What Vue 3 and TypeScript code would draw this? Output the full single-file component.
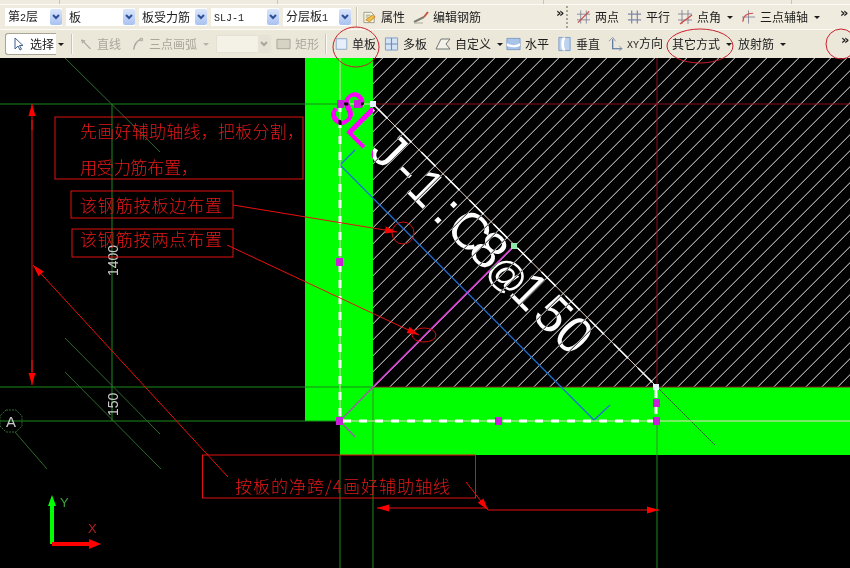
<script setup lang="ts">
type Point = { x: number; y: number }
type Stroke = { d: string; stroke?: string; fill?: string; width?: number }
type Tool = { label?: string; icon?: string; caret?: boolean; off?: boolean; width: number; iconWidth?: number }

const icons: Record<string, Stroke[]> = {
  attr: [
    { d: 'M2 3h8l3 3v8H2z', stroke: '#9a9a8a', fill: '#f8f6ea' },
    { d: 'M4 11l7-5 3 2-6 5z', stroke: '#c98a1e', fill: '#f2c04a' },
    { d: 'M4 6h5M4 8h3', stroke: '#8fa36e' },
  ],
  edit: [
    { d: 'M1 13l10-5', stroke: '#7d7d70', width: 2 },
    { d: 'M11 8l4-5', stroke: '#c0563c', width: 2 },
    { d: 'M1 14h9', stroke: '#a8a898' },
  ],
  two: [
    { d: 'M5 1v14M11 1v14M1 5h14M1 11h14', stroke: '#8a8a9c' },
    { d: 'M2 14L14 2', stroke: '#c64a4a', width: 1.4 },
  ],
  para: [{ d: 'M5 1v14M11 1v14M1 5h14M1 11h14', stroke: '#7f86a8', width: 1.3 }],
  angle: [
    { d: 'M5 1v14M11 1v14M1 5h14M1 11h14', stroke: '#8a8a9c' },
    { d: 'M3 15L15 6', stroke: '#d04a4a', width: 1.4 },
  ],
  three: [
    { d: 'M8 1v14M1 8h14', stroke: '#8a8a9c' },
    { d: 'M2 13c0-6 4-9 11-9', stroke: '#d04a4a', fill: 'none', width: 1.3 },
  ],
  pick: [{ d: 'M5 2v11l3-3 2 4 1.5-.8-2-3.7H13z', stroke: '#3f5f8f', fill: '#fff' }],
  line: [
    { d: 'M2 3l11 11', stroke: '#a7a599', width: 1.5 },
    { d: 'M2 3l4 1-3 3z', stroke: '#a7a599', fill: '#c4c2b6' },
  ],
  arc: [
    { d: 'M2 15C3 8 6 4 11 2', stroke: '#a7a599', fill: 'none', width: 1.5 },
    { d: 'M10 1h3v3h-3z', stroke: '#a7a599', fill: '#d4d2c6' },
  ],
  rect: [{ d: 'M1 3h14v10H1z', stroke: '#a7a599', fill: '#d6d3c5' }],
  single: [{ d: 'M1.5 1.5h13v13h-13z', stroke: '#7f9cc4', fill: '#e6eefa' }],
  multi: [
    { d: 'M1.5 1.5h13v13h-13z', stroke: '#7f9cc4', fill: '#d5e3f6' },
    { d: 'M8 1.5v13M1.5 8h13', stroke: '#6f8cb4', width: 1.2 },
  ],
  custom: [{ d: 'M1 13L6 3h9l-4 5 4 5z', stroke: '#6f7478', fill: '#f4f2e6' }],
  level: [
    { d: 'M1 2h14v12H1z', stroke: '#7f9cc4', fill: '#a9c4e8' },
    { d: 'M1 7c4 3 10 3 14 0v3c-4 2-10 2-14 0z', fill: '#fff' },
  ],
  vert: [
    { d: 'M2 1h12v14H2z', stroke: '#7f9cc4', fill: '#bcd2ee' },
    { d: 'M6 1c-2 4-2 10 0 14h3c-2-4-2-10 0-14z', fill: '#fff' },
  ],
  xy: [
    { d: 'M5 3v10h10', stroke: '#4a6a9a', fill: 'none', width: 1.2 },
    { d: 'M1 5l4-4 3 4M12 10l3 3-3 2', stroke: '#8a94a8', fill: 'none' },
  ],
}

const combos = ['第2层', '板', '板受力筋', 'SLJ-1', '分层板1']

const firstTools: Tool[] = [
  { label: '属性', icon: 'attr', width: 51 },
  { label: '编辑钢筋', icon: 'edit', width: 143, iconWidth: 16 },
]

const axisTools: Tool[] = [
  { label: '两点', icon: 'two', width: 51 },
  { label: '平行', icon: 'para', width: 50 },
  { label: '点角', icon: 'angle', caret: true, width: 64, iconWidth: 16 },
  { label: '三点辅轴', icon: 'three', caret: true, width: 82 },
]

const drawTools: Tool[] = [
  { label: '直线', icon: 'line', off: true, width: 52, iconWidth: 13 },
  { label: '三点画弧', icon: 'arc', off: true, caret: true, width: 84, iconWidth: 13 },
]

const boardTools: Tool[] = [
  { label: '单板', icon: 'single', width: 49, iconWidth: 13 },
  { label: '多板', icon: 'multi', width: 51 },
  { label: '自定义', icon: 'custom', caret: true, width: 71, iconWidth: 16 },
  { label: '水平', icon: 'level', width: 51 },
  { label: '垂直', icon: 'vert', width: 51 },
  { label: 'XY方向', icon: 'xy', width: 64 },
  { label: '其它方式', caret: true, width: 66 },
  { label: '放射筋', caret: true, width: 50 },
]

function segments(label: string) {
  return label.match(/[A-Za-z0-9-]+|[^A-Za-z0-9-]+/g) ?? []
}

function isLatin(part: string) {
  return /^[A-Za-z0-9-]+$/.test(part)
}

// hatch over the slab, clipped to its rectangle
const hatch: Point[] = []
for (let c = 424.7; c < 1240; c += 16) {
  hatch.push({ x: c - 58, y: c - 387 })
}

const arrows: [Point, Point][] = [
  [{ x: 32, y: 130 }, { x: 32, y: 104 }],
  [{ x: 32, y: 360 }, { x: 32, y: 385 }],
  [{ x: 233, y: 205 }, { x: 397, y: 232 }],
  [{ x: 227, y: 245 }, { x: 419, y: 335 }],
  [{ x: 228, y: 477 }, { x: 33, y: 265 }],
  [{ x: 466, y: 482 }, { x: 488, y: 510 }],
  [{ x: 488, y: 508 }, { x: 377, y: 508 }],
  [{ x: 488, y: 510 }, { x: 659, y: 510 }],
]

function arrowHead(from: Point, to: Point) {
  const length = Math.hypot(to.x - from.x, to.y - from.y) || 1
  const ux = (to.x - from.x) / length
  const uy = (to.y - from.y) / length
  const bx = to.x - ux * 12
  const by = to.y - uy * 12
  return `${to.x},${to.y} ${bx - uy * 3.5},${by + ux * 3.5} ${bx + uy * 3.5},${by - ux * 3.5}`
}

const handles: Point[] = [
  { x: 340, y: 104 },
  { x: 357, y: 104 },
  { x: 339, y: 262 },
  { x: 339, y: 421 },
  { x: 498, y: 421 },
  { x: 656, y: 403 },
  { x: 656, y: 421 },
]
</script>

<template>
  <div class="page">
    <header class="toolbar">
      <div class="strip">
        <span class="strip-cell strip-a"></span>
        <span class="strip-cell strip-b"></span>
        <span class="strip-cell strip-c"></span>
        <span class="strip-cell strip-d"></span>
      </div>

      <div class="row row-one">
        <div v-for="combo in combos" :key="combo" class="combo">
          <span class="combo-text">
            <span v-for="part in segments(combo)" :key="part" :class="{ latin: isLatin(part) }">{{ part }}</span>
          </span>
          <span class="combo-button">
            <svg width="8" height="6" viewBox="0 0 8 6"><path d="M1 1l3 3 3-3" fill="none" stroke="#2f4f96" stroke-width="2" /></svg>
          </span>
        </div>
        <span class="sep sep-one"></span>
        <div v-for="tool in firstTools" :key="tool.label" class="tool" :style="{ width: `${tool.width}px` }">
          <svg class="icon" :width="tool.iconWidth ?? 15" height="16" viewBox="0 0 16 16">
            <path v-for="(s, i) in icons[tool.icon!]" :key="i" :d="s.d" :stroke="s.stroke ?? 'none'" :fill="s.fill ?? 'none'" :stroke-width="s.width ?? 1" />
          </svg>
          <span>{{ tool.label }}</span>
        </div>
        <span class="more">»</span>
        <span class="grip"></span>
        <div v-for="tool in axisTools" :key="tool.label" class="tool" :style="{ width: `${tool.width}px` }">
          <svg class="icon" :width="tool.iconWidth ?? 15" height="16" viewBox="0 0 16 16">
            <path v-for="(s, i) in icons[tool.icon!]" :key="i" :d="s.d" :stroke="s.stroke ?? 'none'" :fill="s.fill ?? 'none'" :stroke-width="s.width ?? 1" />
          </svg>
          <span>{{ tool.label }}</span>
          <i v-if="tool.caret" class="caret"></i>
        </div>
        <span class="more more-end">»</span>
      </div>

      <div class="row row-two">
        <div class="pick-box">
          <svg class="icon" width="16" height="16" viewBox="0 0 16 16">
            <path v-for="(s, i) in icons.pick" :key="i" :d="s.d" :stroke="s.stroke ?? 'none'" :fill="s.fill ?? 'none'" />
          </svg>
          <span>选择</span>
        </div>
        <i class="caret caret-pick"></i>
        <span class="sep sep-two"></span>
        <div v-for="tool in drawTools" :key="tool.label" class="tool off" :style="{ width: `${tool.width}px` }">
          <svg class="icon" :width="tool.iconWidth ?? 15" height="16" viewBox="0 0 16 16">
            <path v-for="(s, i) in icons[tool.icon!]" :key="i" :d="s.d" :stroke="s.stroke ?? 'none'" :fill="s.fill ?? 'none'" :stroke-width="s.width ?? 1" />
          </svg>
          <span>{{ tool.label }}</span>
          <i v-if="tool.caret" class="caret"></i>
        </div>
        <div class="combo combo-off">
          <span class="combo-button">
            <svg width="8" height="6" viewBox="0 0 8 6"><path d="M1 1l3 3 3-3" fill="none" stroke="#a8a69c" stroke-width="2" /></svg>
          </span>
        </div>
        <div class="tool off rect-tool">
          <svg class="icon" width="15" height="16" viewBox="0 0 16 16">
            <path v-for="(s, i) in icons.rect" :key="i" :d="s.d" :stroke="s.stroke ?? 'none'" :fill="s.fill ?? 'none'" />
          </svg>
          <span>矩形</span>
        </div>
        <span class="sep sep-three"></span>
        <div v-for="tool in boardTools" :key="tool.label" class="tool" :style="{ width: `${tool.width}px` }">
          <svg v-if="tool.icon" class="icon" :width="tool.iconWidth ?? 15" height="16" viewBox="0 0 16 16">
            <path v-for="(s, i) in icons[tool.icon]" :key="i" :d="s.d" :stroke="s.stroke ?? 'none'" :fill="s.fill ?? 'none'" :stroke-width="s.width ?? 1" />
          </svg>
          <span>
            <span v-for="part in segments(tool.label!)" :key="part" :class="{ latin: isLatin(part) }">{{ part }}</span>
          </span>
          <i v-if="tool.caret" class="caret"></i>
        </div>
        <span class="more more-two">»</span>
      </div>
    </header>

    <svg class="canvas" width="850" height="510" viewBox="0 58 850 510">
      <defs>
        <clipPath id="slab-clip"><rect x="373" y="58" width="477" height="329" /></clipPath>
      </defs>

      <rect x="0" y="58" width="850" height="510" fill="#000" />

      <!-- slab beams -->
      <path d="M305 58H373V387H850V455H340V421H305Z" fill="#00ff00" />

      <g clip-path="url(#slab-clip)">
        <line v-for="(p, i) in hatch" :key="i" :x1="p.x" y1="58" :x2="p.y" y2="387" class="hatch" />
      </g>

      <!-- axis lines -->
      <path d="M0 104H340M0 387H373M0 421H340M112 104V421M373 455V568M340 455V568M657 455V568" class="axis" />
      <path d="M373 387V455" class="axis-on-green" />
      <path d="M657 421V455" class="axis-on-green" />
      <path d="M373 104H850M373 387H850M657 58V387" class="axis-red" />
      <path d="M65 58L160 152M65 338L160 434M65 372L161 469M15 432L47 469" class="axis-dim" />
      <path d="M657 387L715 445" class="axis-dim" />
      <polygon points="6,410 16,410 22,416 22,426 16,432 6,432 0,426 0,416" class="bubble" />

      <text x="11" y="427" class="bubble-text" text-anchor="middle">A</text>
      <text transform="translate(118 276) rotate(-90)" class="dim-text">1400</text>
      <text transform="translate(118 416) rotate(-90)" class="dim-text">150</text>

      <!-- rebars -->
      <path d="M355 150L340 165L594 420L610 405" class="rebar-blue" />
      <path d="M373 387L513 247" class="rebar-pink" />
      <path d="M373 387L340 421L355 437" class="rebar-mauve" />

      <!-- selected outline -->
      <path d="M340 58V421M340 421H850M340 104H373L657 387" class="outline-thin" />
      <path d="M340 104H373M340 104V421H656V387" class="outline-dash" />
      <path d="M373 104L657 387" class="outline-diag" />

      <text transform="translate(327 113) rotate(45) scale(0.66 1)" class="rebar-label rebar-s">S</text>
      <text transform="translate(327 113) rotate(45)" class="rebar-label" x="23 57 89 109 147 165 197 223 255 288 317" y="0">LJ-1:C8<tspan class="rebar-at">@</tspan>150</text>

      <rect v-for="(h, i) in handles" :key="i" :x="h.x - 3" :y="h.y - 4" width="7" height="8" class="handle" />
      <rect x="370" y="101" width="6" height="6" class="node" />
      <rect x="653" y="384" width="6" height="6" class="node" />
      <rect x="511" y="243" width="6" height="6" class="node-green" />

      <!-- notes -->
      <rect x="55" y="117" width="248" height="62" class="note-box" />
      <rect x="71" y="191" width="162" height="27" class="note-box" />
      <rect x="72" y="229" width="161" height="28" class="note-box" />
      <rect x="202.5" y="455" width="273" height="43" class="note-box" />
      <text x="80" y="138" class="note" textLength="224" lengthAdjust="spacing">先画好辅助轴线，把板分割，</text>
      <text x="80" y="174" class="note" textLength="118" lengthAdjust="spacing">用受力筋布置，</text>
      <text x="80" y="212" class="note" textLength="142" lengthAdjust="spacing">该钢筋按板边布置</text>
      <text x="80" y="246" class="note" textLength="142" lengthAdjust="spacing">该钢筋按两点布置</text>
      <text x="235" y="493" class="note" textLength="215" lengthAdjust="spacing">按板的净跨/4画好辅助轴线</text>

      <g v-for="(a, i) in arrows" :key="i">
        <line :x1="a[0].x" :y1="a[0].y" :x2="a[1].x" :y2="a[1].y" class="leader" />
        <polygon :points="arrowHead(a[0], a[1])" fill="#ff0000" />
      </g>
      <path d="M32 120V372" class="leader" />
      <ellipse cx="403" cy="233" rx="11" ry="11" class="mark" />
      <ellipse cx="424" cy="335" rx="12" ry="7" class="mark" />

      <!-- ucs icon -->
      <path d="M52 544V503" class="ucs-y" />
      <polygon points="52,495 48,506 56,506" fill="#00ff00" />
      <path d="M52 544H92" class="ucs-x" />
      <polygon points="101,544 89,539 89,549" fill="#ff0000" />
      <text x="60" y="507" class="ucs-label-y">Y</text>
      <text x="88" y="533" class="ucs-label-x">X</text>
    </svg>

    <svg class="marks" width="850" height="80" viewBox="0 0 850 80">
      <ellipse cx="356" cy="47" rx="23" ry="20" />
      <ellipse cx="700" cy="46" rx="33" ry="17" />
      <ellipse cx="841" cy="44" rx="15" ry="15" />
    </svg>
  </div>
</template>

<style scoped>
.page {
  position: relative;
  width: 850px;
  height: 568px;
  overflow: hidden;
  background: #000;
  font-family: "Noto Sans CJK SC", "Liberation Sans", sans-serif;
}

.toolbar {
  display: flex;
  flex-direction: column;
  height: 58px;
  background: #efecdf;
  color: #1c1c1c;
  font-size: 12px;
  line-height: 16px;
}

.strip {
  display: flex;
  height: 5px;
  border-bottom: 1px solid #fbfaf4;
  box-sizing: border-box;
}

.strip-cell {
  border-right: 1px solid #c9c5b4;
}

.strip-a { width: 59px; }
.strip-b { width: 217px; }
.strip-c { width: 265px; }
.strip-d { width: 247px; }

.row {
  display: flex;
  align-items: center;
}

.row-one {
  height: 25px;
  padding-left: 5px;
  border-bottom: 1px solid #fbfaf4;
  box-sizing: border-box;
}

.row-two {
  height: 28px;
  padding-left: 5px;
  background: #ebe8da;
}

.combo {
  display: flex;
  flex: none;
  align-items: center;
  justify-content: space-between;
  width: 68px;
  height: 18px;
  margin-right: 4px;
  background: #fff;
  box-sizing: border-box;
}

.combo:first-child {
  width: 57px;
}

.combo:nth-child(2) {
  width: 69px;
}

.combo-text {
  padding-left: 3px;
  white-space: nowrap;
}

.latin {
  font-family: "Liberation Mono", monospace;
  font-size: 10px;
}

.combo-button {
  display: flex;
  align-items: center;
  justify-content: center;
  width: 12px;
  height: 16px;
  border-radius: 2px;
  background: linear-gradient(#dbe6fb, #a9c2f2);
}

.row-two .combo-off {
  width: 55px;
  margin: 0 5px 0 0;
  background: #f4f1e6;
  border: 1px solid #e4e1d2;
}

.combo-off .combo-button {
  margin-left: auto;
  background: #e6e3d6;
}

.sep {
  flex: none;
  width: 1px;
  height: 20px;
  background: #c9c5b4;
  box-shadow: 1px 0 0 #fbfaf4;
}

.sep-one { margin: 0 5px 0 1px; }
.sep-two { margin: 0 8px 0 7px; }
.sep-three { margin: 0 9px 0 0; }

.tool {
  display: flex;
  align-items: center;
  flex: none;
  white-space: nowrap;
}

.tool .caret {
  margin-left: 6px;
}

.icon {
  flex: none;
  margin-right: 4px;
}

.off {
  color: #a9a79b;
}

.rect-tool {
  width: 49px;
}

.caret {
  flex: none;
  width: 0;
  height: 0;
  border-left: 3px solid transparent;
  border-right: 3px solid transparent;
  border-top: 3px solid #1c1c1c;
}

.off .caret {
  border-top-color: #b5b3a8;
}

.pick-box {
  display: flex;
  flex: none;
  align-items: center;
  width: 51px;
  height: 22px;
  padding-left: 4px;
  background: #fff;
  border: 1px solid #a9a695;
  border-right: none;
  border-radius: 3px 0 0 3px;
  box-sizing: border-box;
  white-space: nowrap;
}

.caret-pick {
  margin-left: 2px;
}

.more {
  flex: none;
  width: 10px;
  font-family: "DejaVu Sans", sans-serif;
  font-size: 13px;
  font-weight: 700;
  line-height: 12px;
  align-self: flex-start;
  margin-top: 2px;
}

.more-end {
  margin-left: 17px;
}

.more-two {
  margin-left: 53px;
  margin-top: 4px;
}

.grip {
  flex: none;
  height: 22px;
  margin-right: 8px;
  border-left: 2px dotted #a8a595;
}

.canvas {
  display: block;
}

.marks {
  position: absolute;
  top: 0;
  left: 0;
  pointer-events: none;
}

.marks ellipse {
  fill: none;
  stroke: #c8202c;
  stroke-width: 1;
}

.hatch {
  stroke: #e8e8e8;
  stroke-width: 1;
}

.axis {
  fill: none;
  stroke: #1d8a1d;
  stroke-width: 1;
}

.axis-on-green {
  fill: none;
  stroke: #3d8a2e;
  stroke-width: 1;
}

.axis-red {
  fill: none;
  stroke: #8e0e22;
  stroke-width: 1;
}

.axis-dim {
  fill: none;
  stroke: #2d6a2d;
  stroke-width: 1;
}

.bubble {
  fill: none;
  stroke: #2d6a2d;
  stroke-dasharray: 2 1;
}

.bubble-text,
.dim-text {
  fill: #c9c9c9;
  font-family: "Liberation Sans", sans-serif;
  font-size: 14px;
}

.bubble-text {
  font-size: 15px;
}

.rebar-blue {
  fill: none;
  stroke: #1f6fd6;
  stroke-width: 1.3;
}

.rebar-pink {
  fill: none;
  stroke: #d93ad9;
  stroke-width: 1.6;
}

.rebar-mauve {
  fill: none;
  stroke: #9a5fa8;
  stroke-width: 1.5;
}

.outline-thin {
  fill: none;
  stroke: #f4d8c8;
  stroke-width: 1;
}

.outline-dash {
  fill: none;
  stroke: #fff;
  stroke-width: 3;
  stroke-dasharray: 8 8;
}

.outline-diag {
  fill: none;
  stroke: #fff;
  stroke-width: 1.5;
  stroke-dasharray: 20 14;
}

/* white over green comes out magenta, as in the cad's xor drawing */
.rebar-label {
  fill: #fff;
  font-family: "Liberation Sans", sans-serif;
  font-size: 52px;
  mix-blend-mode: difference;
}

.rebar-s {
  stroke: #fff;
  stroke-width: 1;
}

.rebar-at {
  font-size: 38px;
}

.handle {
  fill: #c81fd8;
}

.node {
  fill: #e4f4ff;
}

.node-green {
  fill: #8ee8a8;
}

.note-box {
  fill: none;
  stroke: #e01010;
  stroke-width: 1;
}

.note {
  fill: #e81818;
  font-family: "Noto Sans CJK SC", sans-serif;
  font-size: 17px;
  font-weight: 300;
}

.leader {
  fill: none;
  stroke: #e81010;
  stroke-width: 1;
}

.mark {
  fill: none;
  stroke: #d01010;
  stroke-width: 1;
}

.ucs-y {
  stroke: #00ff00;
  stroke-width: 4;
}

.ucs-x {
  stroke: #ff0000;
  stroke-width: 4;
}

.ucs-label-y {
  fill: #3fa03f;
  font-family: "Liberation Sans", sans-serif;
  font-size: 13px;
}

.ucs-label-x {
  fill: #b82020;
  font-family: "Liberation Sans", sans-serif;
  font-size: 13px;
}
</style>
